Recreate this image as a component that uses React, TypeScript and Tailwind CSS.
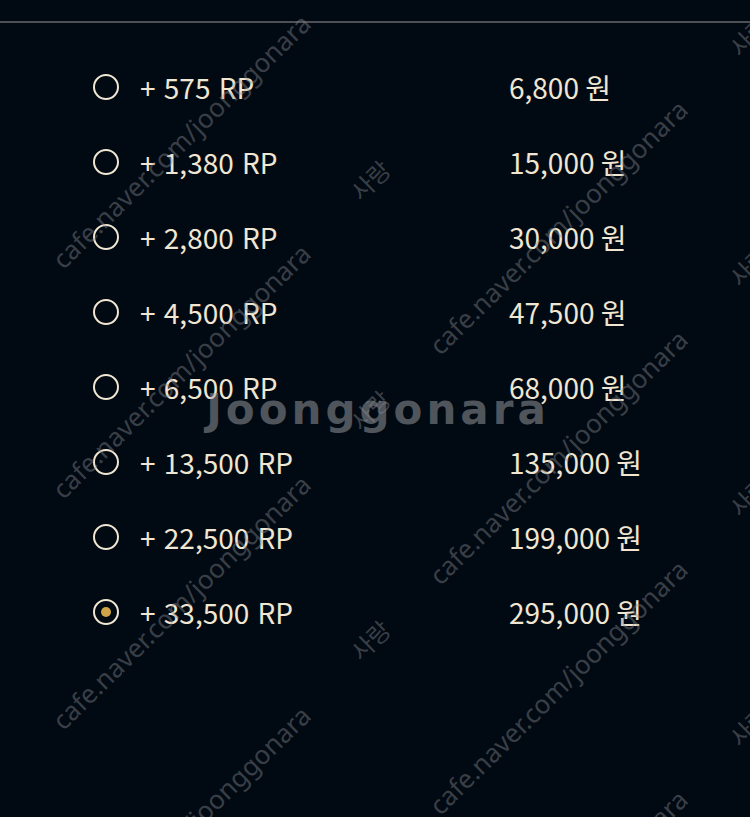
import { useState } from "react";

const packages = [
  { rp: "575", price: "6,800" },
  { rp: "1,380", price: "15,000" },
  { rp: "2,800", price: "30,000" },
  { rp: "4,500", price: "47,500" },
  { rp: "6,500", price: "68,000" },
  { rp: "13,500", price: "135,000" },
  { rp: "22,500", price: "199,000" },
  { rp: "33,500", price: "295,000" },
];

// watermark placements (centre points of the rotated strings)
const urlMarks = [
  [181, 141], [181, 371], [181, 602], [181, 833],
  [558, 227], [558, 457], [558, 687], [558, 917],
];
const loveMarks = [
  [370, 180], [370, 410], [370, 640],
  [749, 36], [749, 266], [749, 496], [749, 726],
];

function Radio({ checked }: { checked: boolean }) {
  return (
    <span className="flex h-[26px] w-[26px] shrink-0 items-center justify-center rounded-full border-2 border-[#f0e6d2]">
      {checked && <span className="h-[10px] w-[10px] rounded-full bg-[#cfa548]" />}
    </span>
  );
}

function Watermarks() {
  return (
    <div className="pointer-events-none absolute inset-0 overflow-hidden">
      <span className="absolute left-[378px] top-[410px] -translate-x-1/2 -translate-y-1/2 whitespace-nowrap text-[42px] font-bold leading-none tracking-[4px] text-[rgba(160,160,166,0.5)] [font-family:'DejaVu_Sans',sans-serif]">
        Joonggonara
      </span>
      {urlMarks.map(([x, y], i) => (
        <span
          key={`u${i}`}
          className="absolute whitespace-nowrap text-[26px] leading-none text-[rgba(140,140,145,0.42)] [font-family:'Noto_Sans',sans-serif]"
          style={{ left: x, top: y, transform: "translate(-50%, -50%) rotate(-44.5deg)" }}
        >
          cafe.naver.com/joonggonara
        </span>
      ))}
      {loveMarks.map(([x, y], i) => (
        <span
          key={`l${i}`}
          className="absolute whitespace-nowrap text-[24px] leading-none text-[rgba(140,140,145,0.42)] [font-family:'Noto_Sans_CJK_KR',sans-serif]"
          style={{ left: x, top: y, transform: "translate(-50%, -50%) rotate(-44.5deg)" }}
        >
          사랑
        </span>
      ))}
    </div>
  );
}

export default function App() {
  const [selected, setSelected] = useState(7);

  return (
    <div className="relative h-[817px] w-[750px] overflow-hidden bg-[#010a13] [font-family:'Noto_Sans_CJK_KR',sans-serif]">
      <div className="pt-[21px]">
        <div className="h-[2px] bg-[#4f4f56]" />
      </div>

      <div className="mt-[26px] flex flex-col pl-[93px]">
        {packages.map((p, i) => (
          <label
            key={p.rp}
            className="flex h-[75px] cursor-pointer items-center text-[28px] text-[#f0e6d2]"
            onClick={() => setSelected(i)}
          >
            <Radio checked={selected === i} />
            <span className="ml-[21px] w-[369px] shrink-0 [word-spacing:2px]">+ {p.rp} RP</span>
            <span>{p.price} 원</span>
          </label>
        ))}
      </div>

      <Watermarks />
    </div>
  );
}
